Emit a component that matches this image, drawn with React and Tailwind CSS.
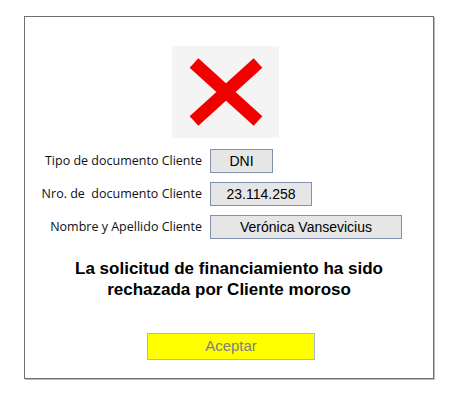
import { useState } from 'react';

const campos = [
  { label: 'Tipo de documento Cliente', value: 'DNI', width: 'w-[63px]' },
  { label: 'Nro. de  documento Cliente', value: '23.114.258', width: 'w-[102px]' },
  { label: 'Nombre y Apellido Cliente', value: 'Verónica Vansevicius', width: 'w-[192px]' },
];

export default function App() {
  const [cerrado, setCerrado] = useState(false);

  return (
    <div className="h-[397px] w-[456px] bg-white pl-[24px] pt-[16px] font-['Liberation_Sans',Arial,sans-serif]">
      <div className="flex h-[363px] w-[410px] flex-col border border-[#6f6f6f] shadow-[1px_1px_0_#bdbdbd]">
        <div className="mt-[29px] ml-[147px] flex h-[92px] w-[107px] items-center justify-center bg-[#f4f4f4]">
          <svg width="78" height="72" viewBox="0 0 78 72">
            <path d="M7 7 L71 65 M71 7 L7 65" stroke="#f20000" strokeWidth="13" strokeLinecap="butt" fill="none" />
          </svg>
        </div>

        <div className="mt-[11px] flex flex-col gap-[9px]">
          {campos.map((c) => (
            <div key={c.label} className="flex items-center">
              <span className="w-[185px] whitespace-pre pr-[8px] text-right font-['Open_Sans',sans-serif] text-[12.5px] text-[#111]">
                {c.label}
              </span>
              <div
                className={`${c.width} flex h-[24px] items-center justify-center border border-[#8290ad] bg-[#e6e6e6] text-[14px] text-black`}
              >
                {c.value}
              </div>
            </div>
          ))}
        </div>

        <p className="mt-[19px] px-[20px] text-center text-[17px] font-bold leading-[21px] text-black">
          La solicitud de financiamiento ha sido
          <br />
          rechazada por Cliente moroso
        </p>

        <button
          onClick={() => setCerrado(!cerrado)}
          className="mt-[33px] ml-[122px] flex h-[27px] w-[168px] items-center justify-center border border-[#a9b8cf] bg-[#ffff00] text-[15px] text-[#808080]"
        >
          Aceptar
        </button>
      </div>
    </div>
  );
}
